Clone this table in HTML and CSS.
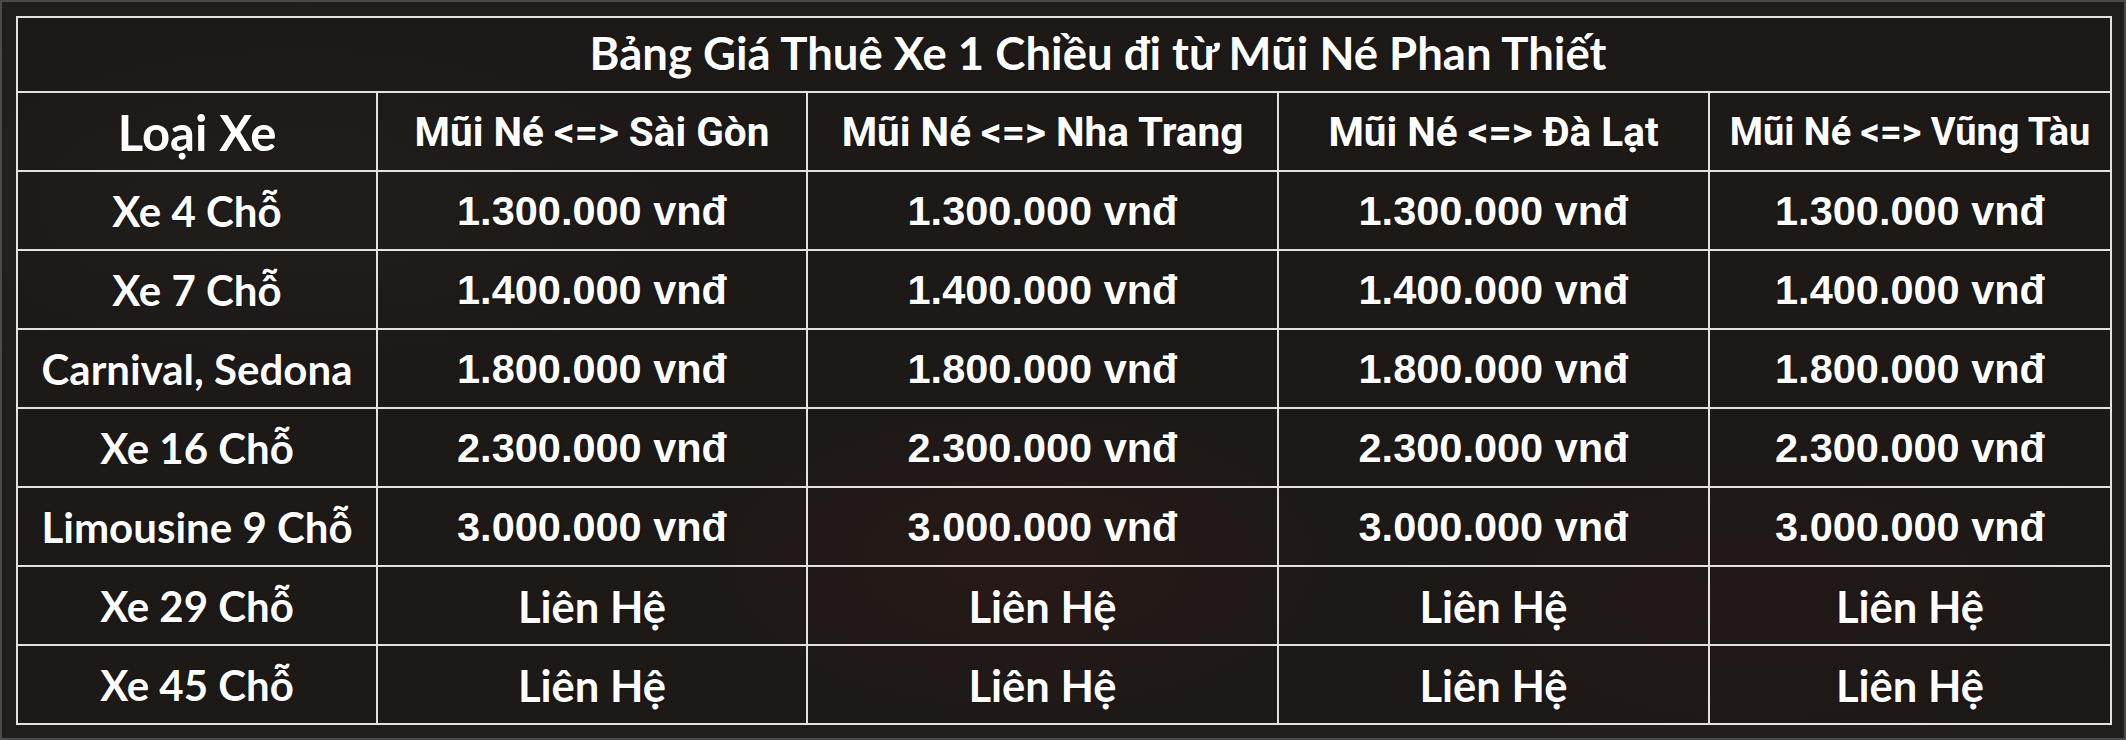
FILE: index.html
```html
<!DOCTYPE html>
<html lang="vi">
<head>
<meta charset="utf-8">
<title>Bảng Giá Thuê Xe 1 Chiều</title>
<link rel="stylesheet" href="styles.css">
</head>
<body>
<div class="frame">
  <table class="price-table">
    <colgroup>
      <col class="c1"><col class="c2"><col class="c3"><col class="c4"><col class="c5">
    </colgroup>
    <thead>
      <tr class="title-row"><th colspan="5" class="title">Bảng Giá Thuê Xe 1 Chiều đi từ Mũi Né Phan Thiết</th></tr>
      <tr class="head-row">
        <th class="label-head">Loại Xe</th>
        <th class="route">Mũi Né &lt;=&gt; Sài Gòn</th>
        <th class="route">Mũi Né &lt;=&gt; Nha Trang</th>
        <th class="route">Mũi Né &lt;=&gt; Đà Lạt</th>
        <th class="route route-small">Mũi Né &lt;=&gt; Vũng Tàu</th>
      </tr>
    </thead>
    <tbody>
      <tr><td class="label">Xe 4 Chỗ</td><td class="price">1.300.000 vnđ</td><td class="price">1.300.000 vnđ</td><td class="price">1.300.000 vnđ</td><td class="price">1.300.000 vnđ</td></tr>
      <tr><td class="label">Xe 7 Chỗ</td><td class="price">1.400.000 vnđ</td><td class="price">1.400.000 vnđ</td><td class="price">1.400.000 vnđ</td><td class="price">1.400.000 vnđ</td></tr>
      <tr><td class="label">Carnival, Sedona</td><td class="price">1.800.000 vnđ</td><td class="price">1.800.000 vnđ</td><td class="price">1.800.000 vnđ</td><td class="price">1.800.000 vnđ</td></tr>
      <tr><td class="label">Xe 16 Chỗ</td><td class="price">2.300.000 vnđ</td><td class="price">2.300.000 vnđ</td><td class="price">2.300.000 vnđ</td><td class="price">2.300.000 vnđ</td></tr>
      <tr><td class="label">Limousine 9 Chỗ</td><td class="price">3.000.000 vnđ</td><td class="price">3.000.000 vnđ</td><td class="price">3.000.000 vnđ</td><td class="price">3.000.000 vnđ</td></tr>
      <tr><td class="label">Xe 29 Chỗ</td><td class="contact">Liên Hệ</td><td class="contact">Liên Hệ</td><td class="contact">Liên Hệ</td><td class="contact">Liên Hệ</td></tr>
      <tr><td class="label">Xe 45 Chỗ</td><td class="contact">Liên Hệ</td><td class="contact">Liên Hệ</td><td class="contact">Liên Hệ</td><td class="contact">Liên Hệ</td></tr>
    </tbody>
  </table>
</div>
</body>
</html>
```

FILE: styles.css
```css
html, body {
  margin: 0;
  padding: 0;
  background: #1f1c1a;
}

.frame {
  box-sizing: border-box;
  width: 2126px;
  height: 740px;
  border: 2px solid #4d4a47;
  padding: 14px 16px 17px 14px;
  background:
    radial-gradient(ellipse 520px 260px at 1020px 560px, rgba(70, 30, 26, 0.45), rgba(70, 30, 26, 0) 70%),
    radial-gradient(ellipse 600px 300px at 1750px 600px, rgba(55, 28, 24, 0.35), rgba(55, 28, 24, 0) 70%),
    radial-gradient(ellipse 700px 300px at 300px 200px, rgba(44, 41, 38, 0.45), rgba(44, 41, 38, 0) 70%),
    #201d1b;
}

.price-table {
  width: 2094px;
  height: 707px;
  border-collapse: collapse;
  table-layout: fixed;
  color: #ffffff;
  background: rgba(20, 18, 17, 0.3);
}

.c1 { width: 360px; }
.c2 { width: 430px; }
.c3 { width: 471px; }
.c4 { width: 431px; }
.c5 { width: 402px; }

.price-table th,
.price-table td {
  border: 2px solid #e4e2df;
  padding: 0;
  text-align: center;
  vertical-align: middle;
  white-space: nowrap;
  text-shadow: 0 0 2px rgba(0, 0, 0, 0.6);
}

.title-row { height: 75px; }
.head-row { height: 79px; }
.price-table tbody tr { height: 79px; }

.title {
  font-family: "Lato", "Open Sans", sans-serif;
  font-weight: 700;
  font-size: 45.5px;
  padding-left: 68px !important;
  padding-bottom: 4px !important;
}

.label-head {
  font-family: "Lato", "Open Sans", sans-serif;
  font-weight: 700;
  font-size: 49px;
}

.route {
  font-family: "Roboto", "Liberation Sans", sans-serif;
  font-weight: 700;
  font-size: 40.5px;
}

.route-small {
  font-size: 38px;
}

.label {
  font-family: "Lato", "Open Sans", sans-serif;
  font-weight: 700;
  font-size: 42px;
}

.price {
  font-family: "Liberation Sans", Arial, sans-serif;
  font-weight: 700;
  font-size: 41.5px;
}

.contact {
  font-family: "Lato", "Open Sans", sans-serif;
  font-weight: 700;
  font-size: 43.5px;
}
```
